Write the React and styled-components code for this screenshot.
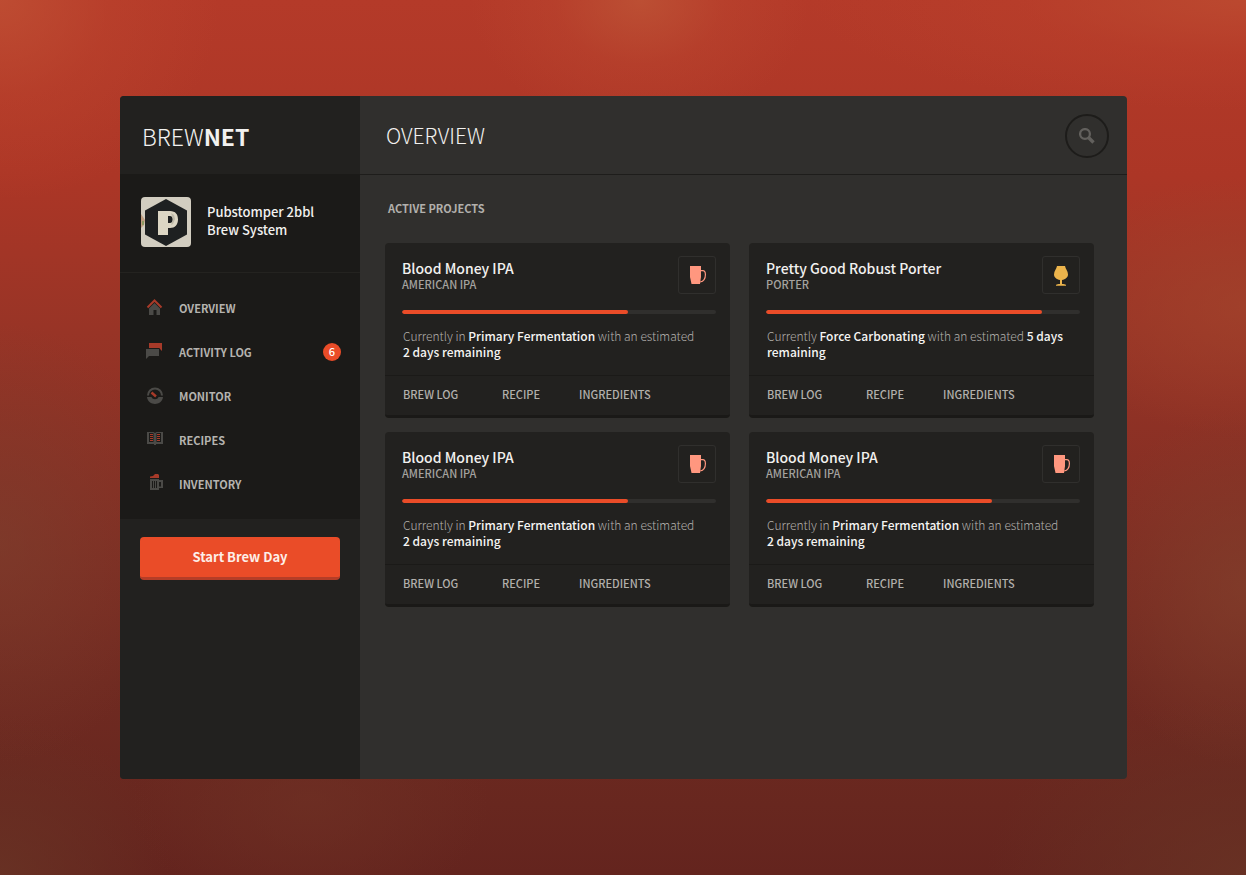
import React from "react";
import styled, { createGlobalStyle } from "styled-components";

const Global = createGlobalStyle`
  *, *::before, *::after { box-sizing: border-box; }
  body {
    margin: 0;
    color: #f2f1ef;
    font-family: "Noto Sans CJK JP", "Noto Sans", sans-serif;
    -webkit-font-smoothing: antialiased;
  }
`;

const Page = styled.div`
  min-height: 100vh;
  padding: 96px 119px 96px 120px;
  display: flex;
  background:
    radial-gradient(ellipse 170px 130px at 640px 0, rgba(190, 84, 54, 0.8), rgba(190, 76, 50, 0.3) 50%, rgba(190, 66, 44, 0)),
    radial-gradient(ellipse 220px 200px at 0 0, rgba(192, 80, 52, 0.8), rgba(190, 70, 46, 0.4) 50%, rgba(190, 64, 44, 0)),
    radial-gradient(ellipse 440px 110px at 100% 0, rgba(188, 74, 48, 0.9), rgba(188, 66, 44, 0.4) 50%, rgba(186, 60, 42, 0)),
    radial-gradient(ellipse 200px 130px at 100% 35%, rgba(162, 68, 44, 0.7), rgba(156, 60, 42, 0)),
    radial-gradient(ellipse 160px 180px at 100% 67%, rgba(130, 64, 44, 0.7), rgba(124, 56, 40, 0)),
    radial-gradient(ellipse 180px 220px at 0 62%, rgba(124, 64, 46, 0.6), rgba(124, 56, 42, 0)),
    radial-gradient(ellipse 180px 120px at 310px 800px, rgba(110, 48, 36, 0.7), rgba(106, 42, 34, 0)),
    radial-gradient(ellipse 260px 180px at 100% 100%, rgba(104, 50, 36, 0.9), rgba(104, 44, 34, 0)),
    radial-gradient(ellipse 170px 160px at 0 100%, rgba(104, 50, 36, 0.9), rgba(104, 44, 34, 0)),
    linear-gradient(#b43a29 0, #ac3626 20%, #983426 38%, #862f24 56%, #702a21 78%, #68271f 92%, #64241e 100%);
`;

const Window = styled.div`
  flex: 1;
  display: grid;
  grid-template-columns: 240px 1fr;
  overflow: hidden;
  border-radius: 4px;
  background: #302f2d;
`;

const Sidebar = styled.aside`
  background: #22211f;
`;

const Brand = styled.div`
  height: 78px;
  padding: 2px 0 0 22px;
  display: flex;
  align-items: center;
  font-size: 23px;
  font-weight: 300;
  strong { font-weight: 700; }
`;

const Dark = styled.div`
  background: #1b1a18;
`;

const System = styled.div`
  height: 99px;
  padding: 0 21px 2px;
  display: flex;
  align-items: center;
  gap: 16px;
  border-bottom: 1px solid #242320;
  font-size: 13px;
  font-weight: 500;
  line-height: 18px;
  svg { flex: none; }
`;

const SystemName = styled.span`
  padding-bottom: 2px;
`;

const Nav = styled.nav`
  padding: 13px 0;
`;

const NavLink = styled.a`
  height: 44px;
  padding: 0 19px 0 25px;
  display: flex;
  align-items: center;
  color: #b5b3af;
  font-size: 11px;
  font-weight: 700;
  line-height: 18px;
  text-decoration: none;
  svg { margin-right: 14px; }
`;

const NavLabel = styled.span`
  padding-bottom: 1px;
`;

const Badge = styled.span`
  width: 18px;
  height: 18px;
  margin-left: auto;
  border-radius: 50%;
  background: #ea4c28;
  color: #fff;
  font-weight: 500;
  line-height: 17px;
  text-align: center;
`;

const StartButton = styled.button`
  display: block;
  width: 200px;
  height: 43px;
  margin: 18px auto 0;
  padding: 0 0 2px;
  border: 0;
  border-bottom: 3px solid #b53d27;
  border-radius: 4px;
  background: #ea4c28;
  color: #fdeee8;
  font: 700 13px "Noto Sans CJK JP", sans-serif;
`;

const Header = styled.header`
  height: 79px;
  padding: 2px 18px 0 26px;
  display: flex;
  align-items: center;
  justify-content: space-between;
  border-bottom: 1px solid #1e1d1b;
`;

const Title = styled.h1`
  margin: 0;
  padding-bottom: 2px;
  font-size: 21px;
  font-weight: 300;
`;

const SearchButton = styled.button`
  width: 44px;
  height: 44px;
  padding: 0;
  display: grid;
  place-items: center;
  border: 2px solid #1d1c1a;
  border-radius: 50%;
  background: transparent;
`;

const Content = styled.section`
  padding: 23px 33px 24px 25px;
`;

const SectionTitle = styled.h2`
  margin: 0 0 25px 3px;
  color: #b2b0ac;
  font-size: 11px;
  font-weight: 700;
  line-height: 20px;
`;

const Cards = styled.div`
  display: grid;
  grid-template-columns: 1fr 1fr;
  gap: 14px 19px;
`;

const Card = styled.article`
  overflow: hidden;
  border-bottom: 3px solid #1a1917;
  border-radius: 4px;
  background: #22211f;
`;

const CardBody = styled.div`
  padding: 13px 14px 15px 17px;
`;

const CardTop = styled.div`
  display: flex;
  justify-content: space-between;
`;

const Name = styled.h3`
  margin: 3px 0 0;
  font-size: 14px;
  font-weight: 500;
  line-height: 18px;
`;

const Style = styled.p`
  margin: 0;
  color: #a5a39f;
  font-size: 11px;
  font-weight: 500;
  line-height: 14px;
`;

const GlassBox = styled.div`
  width: 38px;
  height: 38px;
  display: grid;
  place-items: center;
  border: 1px solid #302f2d;
  border-radius: 3px;
`;

const Track = styled.div`
  height: 4px;
  margin: 16px 0 14px;
  overflow: hidden;
  border-radius: 2px;
  background: #302f2d;
`;

const Fill = styled.div`
  height: 4px;
  border-radius: 2px;
  background: #ea4c28;
`;

const Status = styled.p`
  max-width: 300px;
  margin: 0 0 0 1px;
  color: #b2b0ac;
  font-size: 12px;
  font-weight: 300;
  line-height: 16px;
  strong { color: #f6f5f3; font-weight: 500; }
`;

const CardLinks = styled.nav`
  height: 40px;
  padding: 0 18px 3px;
  display: grid;
  grid-template-columns: 99px 77px 1fr;
  align-items: center;
  border-top: 1px solid #1b1a18;
  a {
    color: #b2b0ac;
    font-size: 11px;
    font-weight: 500;
    text-decoration: none;
  }
`;

const GREY = "#4b4a47";
const RED = "#a73a29";

const Icon = ({ children }) => (
  <svg width="20" height="20" viewBox="0 0 20 20" aria-hidden="true">{children}</svg>
);

const HomeIcon = () => (
  <Icon>
    <path d="M2.500 9.500 9.500 2.500l7 7" fill="none" stroke={RED} strokeWidth="2" />
    <path d="M9.500 5 15 10.500V17h-3.500v-5H8.500v5H4v-6.500z" fill={GREY} />
  </Icon>
);
const ChatIcon = () => (
  <Icon>
    <path d="M4 1h13v8l-2-2H4z" fill={RED} />
    <path d="M1 7h13v7H4l-3 3z" fill={GREY} />
    <path d="M3 6.500h11.500V10" fill="none" stroke="#1b1a18" />
  </Icon>
);
const GaugeIcon = () => (
  <Icon>
    <path d="M3 9.500a7 7 0 0 1 14 0" fill="none" stroke={GREY} strokeWidth="2" />
    <path d="M2 11h4.500c1 3 6 3 7 0H18c-1 9.300-15 9.300-16 0z" fill={GREY} />
    <path d="m6.500 6.500 4.500 4" stroke={RED} strokeWidth="2.400" />
  </Icon>
);
const BookIcon = () => (
  <Icon>
    <path d="M2 2h6.500l1.500 1 1.500-1H18v12h-7v1H9v-1H2z" fill={GREY} />
    <path d="M4 3h4.500v9H4zM11.500 3H16v9h-4.500z" fill="#1b1a18" />
    <path d="M5 4.500h3M5 6.500h3M5 8.500h3M5 10.500h3M12 4.500h3M12 6.500h3M12 8.500h3M12 10.500h3" stroke={RED} />
  </Icon>
);
const BeerIcon = () => (
  <Icon>
    <path d="M5 4V2.500L8 2l2-2h3l1 1v3z" fill={RED} />
    <path fillRule="evenodd" d="M5 5h9v1h4v8h-4v2H5zM14 8v4.500h2V8z" fill={GREY} />
    <path d="M7.500 7v7M9.500 7v7M11.500 7v7" stroke="#1b1a18" />
  </Icon>
);
const SearchIcon = () => (
  <svg width="16" height="16" viewBox="0 0 16 16" aria-hidden="true">
    <circle cx="6" cy="6" r="4.900" fill="none" stroke="#62605d" strokeWidth="2.300" />
    <path d="m9.500 9.500 5 5" stroke="#62605d" strokeWidth="3.400" />
  </svg>
);
const Mug = () => (
  <svg width="18" height="20" viewBox="0 0 18 20" aria-hidden="true">
    <path d="M2 1h11v11l-1 7H3.500L2 12z" fill="#ff977f" />
    <path d="M12.500 5.700h2.300c2 0 2.600 1.300 2.600 4 0 4-1.700 6.500-5.200 7.300" fill="none" stroke="#ff977f" strokeWidth="1.200" />
  </svg>
);
const Tulip = () => (
  <svg width="18" height="22" viewBox="0 0 18 22" aria-hidden="true">
    <path d="M5 2h8c.4 3 3 5 3 8.500 0 3-2.500 4.800-6 5.500v4c1.500 0 3.500.3 4 1v.7H4V21c.5-.7 2.500-1 4-1v-4c-3.500-.7-6-2.500-6-5.500C2 7 4.600 5 5 2z" fill="#ecb44c" />
  </svg>
);
const Avatar = () => (
  <svg width="50" height="50" viewBox="0 0 50 50" role="img" aria-label="Pubstomper">
    <rect width="50" height="50" rx="4" fill="#d2cdc0" />
    <path d="M0 17l2 3 2 3-1 5-3 3z" fill="#bf9d80" />
    <path d="M1 24h2v4H1z" fill="#8f9a62" />
    <path d="M25 2l21 11.500v24L25 49 4 37.500v-24z" fill="#1e2021" />
    <path fillRule="evenodd" d="M17 14h12c5.500 0 8 3.500 8 8.500S34 31 29 31h-2v7H17zM27 19v7h2c3.500 0 3.500-7 0-7z" fill="#dcd6c4" />
    <path d="M30 16l3 2 1 4-2 5-2 1 2-6z" fill="#9d998b" opacity="0.500" />
  </svg>
);

const items = [
  ["OVERVIEW", HomeIcon],
  ["ACTIVITY LOG", ChatIcon, 6],
  ["MONITOR", GaugeIcon],
  ["RECIPES", BookIcon],
  ["INVENTORY", BeerIcon],
];

const blood = {
  name: "Blood Money IPA", style: "AMERICAN IPA", Glass: Mug, progress: 72,
  lead: "Currently in ", stage: "Primary Fermentation", left: "2 days remaining",
};
const projects = [
  blood,
  {
    name: "Pretty Good Robust Porter", style: "PORTER", Glass: Tulip, progress: 88,
    lead: "Currently ", stage: "Force Carbonating", left: "5 days remaining",
  },
  blood,
  blood,
];

const Project = ({ name, style, Glass, progress, lead, stage, left }) => (
  <Card>
    <CardBody>
      <CardTop>
        <div>
          <Name>{name}</Name>
          <Style>{style}</Style>
        </div>
        <GlassBox><Glass /></GlassBox>
      </CardTop>
      <Track role="progressbar" aria-label={name} aria-valuenow={progress}>
        <Fill style={{ width: `${progress}%` }} />
      </Track>
      <Status>
        {lead}<strong>{stage}</strong> with an estimated <strong>{left}</strong>
      </Status>
    </CardBody>
    <CardLinks>
      <a href="#log">BREW LOG</a>
      <a href="#recipe">RECIPE</a>
      <a href="#ingredients">INGREDIENTS</a>
    </CardLinks>
  </Card>
);

export default function App() {
  return (
    <Page>
      <Global />
      <Window>
        <Sidebar>
          <Brand><span>BREW<strong>NET</strong></span></Brand>
          <Dark>
            <System>
              <Avatar />
              <SystemName>Pubstomper 2bbl<br />Brew System</SystemName>
            </System>
            <Nav>
              {items.map(([label, Glyph, count]) => (
                <NavLink key={label} href="#">
                  <Glyph />
                  <NavLabel>{label}</NavLabel>
                  {count && <Badge>{count}</Badge>}
                </NavLink>
              ))}
            </Nav>
          </Dark>
          <StartButton type="button">Start Brew Day</StartButton>
        </Sidebar>
        <main>
          <Header>
            <Title>OVERVIEW</Title>
            <SearchButton type="button" aria-label="Search"><SearchIcon /></SearchButton>
          </Header>
          <Content>
            <SectionTitle>ACTIVE PROJECTS</SectionTitle>
            <Cards>
              {projects.map((project, i) => <Project key={i} {...project} />)}
            </Cards>
          </Content>
        </main>
      </Window>
    </Page>
  );
}
